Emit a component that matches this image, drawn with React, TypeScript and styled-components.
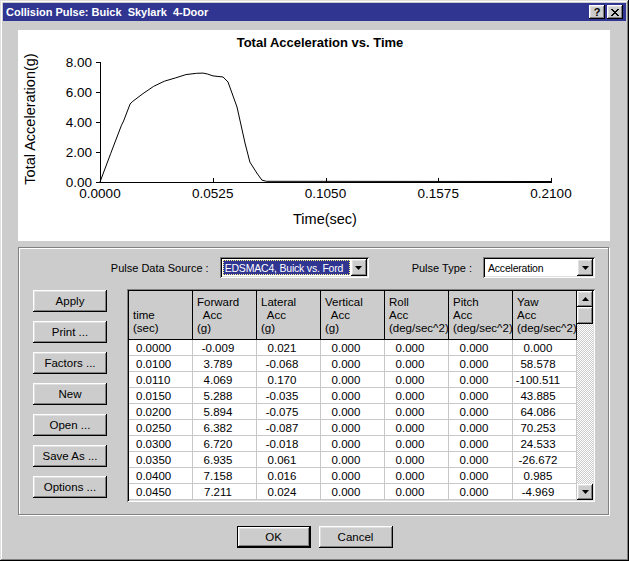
import React from 'react';
import styled, { createGlobalStyle, css } from 'styled-components';

const GlobalStyle = createGlobalStyle`
  html, body {
    margin: 0;
    padding: 0;
    background: #cccccc;
  }
  body {
    font-family: "Liberation Sans", Arial, sans-serif;
    font-size: 11px;
    color: #000;
  }
`;

const raised = css`
  box-shadow: inset -1px -1px #000, inset 1px 1px #fff, inset -2px -2px #808080,
    inset 2px 2px #dfdfdf;
`;

const sunken = css`
  box-shadow: inset 1px 1px #808080, inset -1px -1px #fff, inset 2px 2px #000,
    inset -2px -2px #dfdfdf;
`;

const Window = styled.div`
  width: 629px;
  height: 561px;
  box-sizing: border-box;
  padding: 3px;
  background: #cccccc;
  box-shadow: inset -1px -1px #000, inset 1px 1px #dfdfdf, inset -2px -2px #808080,
    inset 2px 2px #fff;
  display: flex;
  flex-direction: column;
`;

const TitleBar = styled.div`
  height: 18px;
  background: #2f3591;
  color: #fff;
  display: flex;
  align-items: center;
  padding: 0 3px 0 3px;
  font-weight: bold;
  font-size: 11px;
`;

const TitleText = styled.span`
  flex: 1;
  white-space: pre;
`;

const CaptionButton = styled.div<{ $gap?: number }>`
  width: 16px;
  height: 14px;
  margin-left: ${p => p.$gap ?? 0}px;
  background: #cccccc;
  ${raised};
  display: flex;
  align-items: center;
  justify-content: center;
  color: #000;
  font-weight: bold;
  font-size: 11px;
  line-height: 14px;
`;

const Body = styled.div`
  display: flex;
  flex-direction: column;
  align-items: flex-start;
  padding: 9px 0 0 15px;
`;

const ChartPanel = styled.div`
  width: 592px;
  height: 211px;
  background: #fff;
`;

const GroupBox = styled.div`
  margin-top: 6px;
  width: 591px;
  height: 268px;
  box-sizing: border-box;
  border: 1px solid #808080;
  box-shadow: inset 1px 1px #fff, 1px 1px #fff;
  padding: 9px 13px 0 14px;
`;

const ControlRow = styled.div`
  height: 21px;
  display: flex;
  justify-content: flex-end;
  align-items: center;
  gap: 43px;
`;

const Field = styled.div`
  display: flex;
  align-items: center;
  gap: 11px;
`;

const Label = styled.span`
  white-space: pre;
`;

const Combo = styled.div<{ $width: number }>`
  width: ${p => p.$width}px;
  height: 21px;
  box-sizing: border-box;
  padding: 2px;
  background: #fff;
  ${sunken};
  display: flex;
`;

const ComboValue = styled.div<{ $selected?: boolean }>`
  flex: 1;
  display: flex;
  align-items: center;
  padding-left: 2px;
  margin: 1px;
  white-space: nowrap;
  overflow: hidden;
  background: ${p => (p.$selected ? '#2f3591' : '#fff')};
  color: ${p => (p.$selected ? '#fff' : '#000')};
  outline: ${p => (p.$selected ? '1px dotted #ffff80' : 'none')};
  outline-offset: -1px;
  font-size: 10.5px;
  letter-spacing: -0.2px;
`;

const ArrowButton = styled.div`
  width: 16px;
  height: 17px;
  flex-shrink: 0;
  background: #cccccc;
  ${raised};
  display: flex;
  align-items: center;
  justify-content: center;
`;

const ContentRow = styled.div`
  margin-top: 11px;
  display: flex;
  gap: 20px;
`;

const ButtonColumn = styled.div`
  display: flex;
  flex-direction: column;
  gap: 9px;
  padding-top: 1px;
`;

const Button = styled.div<{ $default?: boolean }>`
  width: 74px;
  height: 22px;
  box-sizing: border-box;
  background: #cccccc;
  ${raised};
  display: flex;
  align-items: center;
  justify-content: center;
  font-size: 11.5px;
  ${p =>
    p.$default &&
    css`
      border: 1px solid #000;
    `}
`;

const TableFrame = styled.div`
  width: 468px;
  height: 213px;
  box-sizing: border-box;
  padding: 2px;
  ${sunken};
  background: #fff;
  display: flex;
`;

const Grid = styled.div`
  width: 448px;
  display: flex;
  flex-direction: column;
`;

const HeaderRow = styled.div`
  display: flex;
  height: 49px;
  box-sizing: border-box;
  border-bottom: 1px solid #000;
  background: #cccccc;
`;

const HeaderCell = styled.div`
  width: 64px;
  box-sizing: border-box;
  border-right: 1px solid #000;
  display: flex;
  flex-direction: column;
  justify-content: flex-end;
  padding: 0 0 4px 4px;
  line-height: 13px;
  font-size: 11.5px;
  white-space: pre;
`;

const Row = styled.div`
  display: flex;
  height: 16px;
`;

const Cell = styled.div<{ $left?: boolean }>`
  width: 64px;
  height: 16px;
  box-sizing: border-box;
  border-right: 1px solid #c8c8c8;
  border-bottom: 1px solid #c8c8c8;
  display: flex;
  align-items: center;
  justify-content: ${p => (p.$left ? 'flex-start' : 'center')};
  padding: ${p => (p.$left ? '0 0 0 7px' : '0 13px 0 0')};
  font-size: 11.5px;
  white-space: nowrap;
`;

const ScrollBar = styled.div`
  width: 16px;
  display: flex;
  flex-direction: column;
`;

const ScrollButton = styled.div<{ $h: number }>`
  height: ${p => p.$h}px;
  background: #cccccc;
  ${raised};
  display: flex;
  align-items: center;
  justify-content: center;
`;

const ScrollTrack = styled.div`
  flex: 1;
  background: repeating-conic-gradient(#fff 0 25%, #cccccc 0 50%) 0 0 / 2px 2px;
`;

const Footer = styled.div`
  display: flex;
  justify-content: center;
  gap: 8px;
  padding-top: 11px;
`;

const Triangle: React.FC<{ up?: boolean }> = ({ up }) => (
  <svg width="7" height="4" viewBox="0 0 7 4">
    <polygon points={up ? '3.5,0 7,4 0,4' : '0,0 7,0 3.5,4'} fill="#000" />
  </svg>
);

// chart geometry
const X0 = 82;
const X1 = 533;
const Y0 = 152;
const toX = (t: number) => X0 + (t / 0.21) * (X1 - X0);
const toY = (a: number) => Y0 - a * 15;

const pulse: [number, number][] = [
  [0, 0],
  [0.005, 1.9],
  [0.01, 3.789],
  [0.011, 4.069],
  [0.014, 5.2],
  [0.015, 5.35],
  [0.02, 5.894],
  [0.025, 6.382],
  [0.03, 6.72],
  [0.035, 6.935],
  [0.04, 7.158],
  [0.045, 7.25],
  [0.048, 7.26],
  [0.05, 7.2],
  [0.0526, 7.07],
  [0.0573, 7.0],
  [0.0596, 6.67],
  [0.0638, 5.0],
  [0.0675, 2.6],
  [0.0698, 1.33],
  [0.073, 0.6],
  [0.0754, 0.13],
  [0.0775, 0.05],
];

const chartFont = '"Liberation Sans", Arial, sans-serif';

const Chart: React.FC = () => {
  const pts = pulse.map(([t, a]) => `${toX(t).toFixed(1)},${toY(a).toFixed(1)}`);
  pts.push(`${X1},${Y0 - 0.5}`);
  const xTicks = ['0.0000', '0.0525', '0.1050', '0.1575', '0.2100'];
  const yTicks = ['0.00', '2.00', '4.00', '6.00', '8.00'];
  return (
    <svg width="592" height="211" viewBox="0 0 592 211" fontFamily={chartFont}>
      <text x="302" y="17" fontSize="13" fontWeight="bold" textAnchor="middle">
        Total Acceleration vs. Time
      </text>
      <g shapeRendering="crispEdges" stroke="#000" strokeWidth="1">
        <line x1={X0 + 0.5} y1="32" x2={X0 + 0.5} y2={Y0 + 1} />
        <line x1={X0} y1={Y0 + 0.5} x2={X1 + 1} y2={Y0 + 0.5} />
        {yTicks.map((_, i) => (
          <line key={i} x1={X0 - 4} y1={Y0 - i * 30 + 0.5} x2={X0} y2={Y0 - i * 30 + 0.5} />
        ))}
        {xTicks.map((_, i) => {
          const x = Math.round(X0 + i * 112.75) + 0.5;
          return <line key={i} x1={x} y1={Y0 - 4} x2={x} y2={Y0} />;
        })}
      </g>
      {yTicks.map((l, i) => (
        <text key={l} x="74" y={Y0 - i * 30 + 5} fontSize="13.5" textAnchor="end">
          {l}
        </text>
      ))}
      {xTicks.map((l, i) => (
        <text key={l} x={X0 + i * 112.75} y="168" fontSize="13.5" textAnchor="middle">
          {l}
        </text>
      ))}
      <text x="307" y="194" fontSize="14.5" textAnchor="middle">
        Time(sec)
      </text>
      <text
        x="0"
        y="0"
        fontSize="14.5"
        textAnchor="middle"
        transform="translate(17 89) rotate(-90)"
      >
        Total Acceleration(g)
      </text>
      <polyline points={pts.join(' ')} fill="none" stroke="#000" strokeWidth="1" />
    </svg>
  );
};

const headers: string[][] = [
  ['', 'time', '(sec)'],
  ['Forward', '  Acc', '(g)'],
  ['Lateral', '  Acc', '(g)'],
  ['Vertical', '  Acc', '(g)'],
  ['Roll', 'Acc', '(deg/sec^2)'],
  ['Pitch', 'Acc', '(deg/sec^2)'],
  ['Yaw', 'Acc', '(deg/sec^2)'],
];

const rows: [string, string, string, string][] = [
  ['0.0000', '-0.009', '0.021', '0.000'],
  ['0.0100', '3.789', '-0.068', '58.578'],
  ['0.0110', '4.069', '0.170', '-100.511'],
  ['0.0150', '5.288', '-0.035', '43.885'],
  ['0.0200', '5.894', '-0.075', '64.086'],
  ['0.0250', '6.382', '-0.087', '70.253'],
  ['0.0300', '6.720', '-0.018', '24.533'],
  ['0.0350', '6.935', '0.061', '-26.672'],
  ['0.0400', '7.158', '0.016', '0.985'],
  ['0.0450', '7.211', '0.024', '-4.969'],
];

const actions = ['Apply', 'Print ...', 'Factors ...', 'New', 'Open ...', 'Save As ...', 'Options ...'];

const App: React.FC = () => (
  <>
    <GlobalStyle />
    <Window>
      <TitleBar>
        <TitleText>Collision Pulse: Buick  Skylark  4-Door</TitleText>
        <CaptionButton>?</CaptionButton>
        <CaptionButton $gap={2}>
          <svg width="8" height="7" viewBox="0 0 8 7" shapeRendering="crispEdges">
            <path d="M0 0h2v1h-2zM6 0h2v1h-2zM1 1h2v1h-2zM5 1h2v1h-2zM2 2h4v1h-4zM3 3h2v1h-2zM2 4h4v1h-4zM1 5h2v1h-2zM5 5h2v1h-2zM0 6h2v1h-2zM6 6h2v1h-2z" fill="#000" />
          </svg>
        </CaptionButton>
      </TitleBar>
      <Body>
        <ChartPanel>
          <Chart />
        </ChartPanel>
        <GroupBox>
          <ControlRow>
            <Field>
              <Label>Pulse Data Source :</Label>
              <Combo $width={149}>
                <ComboValue $selected>EDSMAC4, Buick vs. Ford</ComboValue>
                <ArrowButton>
                  <Triangle />
                </ArrowButton>
              </Combo>
            </Field>
            <Field>
              <Label>Pulse Type :</Label>
              <Combo $width={112}>
                <ComboValue>Acceleration</ComboValue>
                <ArrowButton>
                  <Triangle />
                </ArrowButton>
              </Combo>
            </Field>
          </ControlRow>
          <ContentRow>
            <ButtonColumn>
              {actions.map(a => (
                <Button key={a}>{a}</Button>
              ))}
            </ButtonColumn>
            <TableFrame>
              <Grid>
                <HeaderRow>
                  {headers.map((h, i) => (
                    <HeaderCell key={i}>
                      {h.map((line, j) => (
                        <div key={j}>{line || ' '}</div>
                      ))}
                    </HeaderCell>
                  ))}
                </HeaderRow>
                {rows.map(r => (
                  <Row key={r[0]}>
                    <Cell $left>{r[0]}</Cell>
                    <Cell>{r[1]}</Cell>
                    <Cell>{r[2]}</Cell>
                    <Cell>0.000</Cell>
                    <Cell>0.000</Cell>
                    <Cell>0.000</Cell>
                    <Cell>{r[3]}</Cell>
                  </Row>
                ))}
              </Grid>
              <ScrollBar>
                <ScrollButton $h={16}>
                  <Triangle up />
                </ScrollButton>
                <ScrollButton $h={17} />
                <ScrollTrack />
                <ScrollButton $h={16}>
                  <Triangle />
                </ScrollButton>
              </ScrollBar>
            </TableFrame>
          </ContentRow>
        </GroupBox>
      </Body>
      <Footer>
        <Button $default>OK</Button>
        <Button>Cancel</Button>
      </Footer>
    </Window>
  </>
);

export default App;
